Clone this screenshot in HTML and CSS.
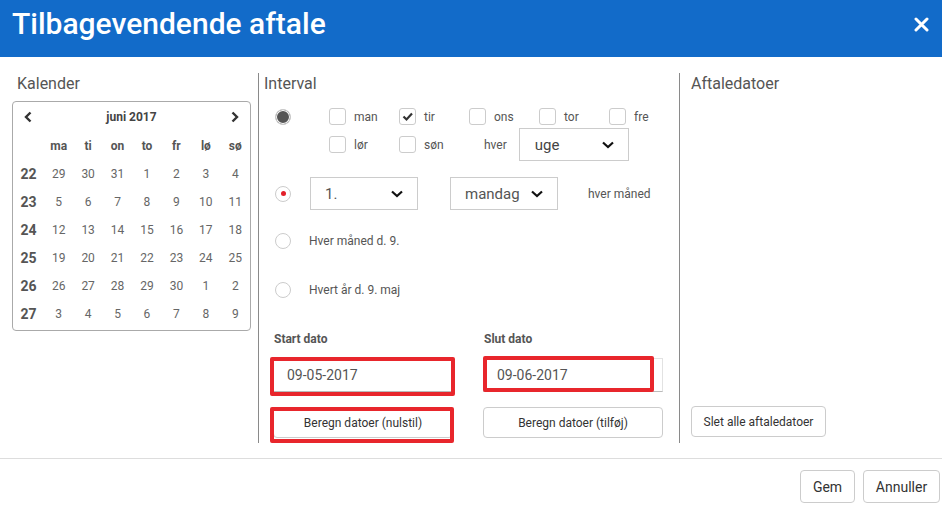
FILE: index.html
```html
<!DOCTYPE html>
<html lang="da">
<head>
    <meta charset="UTF-8">
    <title>Tilbagevendende aftale</title>
    <link rel="stylesheet" href="styles.css">
</head>
<body>
    <div class="dialog-header">
        <div class="dialog-title">Tilbagevendende aftale</div>
        <svg class="close" width="15" height="15" viewBox="0 0 15 15"><path d="M2 2 L13 13 M13 2 L2 13" stroke="#fff" stroke-width="3" stroke-linecap="round"/></svg>
    </div>

    <div class="dialog-body">
        <div class="col col-calendar">
            <div class="col-title">Kalender</div>
            <div class="calendar">
                <div class="cal-head">
                    <svg width="8" height="12" viewBox="0 0 8 12"><path d="M6.5 1.5 L2 6 L6.5 10.5" fill="none" stroke="#333" stroke-width="2.4"/></svg>
                    <span>juni 2017</span>
                    <svg width="8" height="12" viewBox="0 0 8 12"><path d="M1.5 1.5 L6 6 L1.5 10.5" fill="none" stroke="#333" stroke-width="2.4"/></svg>
                </div>
                <div class="cal-grid">
                    <span></span><span class="dow">ma</span><span class="dow">ti</span><span class="dow">on</span><span class="dow">to</span><span class="dow">fr</span><span class="dow">lø</span><span class="dow">sø</span>
                    <span class="wk">22</span><span>29</span><span>30</span><span>31</span><span>1</span><span>2</span><span>3</span><span>4</span>
                    <span class="wk">23</span><span>5</span><span>6</span><span>7</span><span>8</span><span>9</span><span>10</span><span>11</span>
                    <span class="wk">24</span><span>12</span><span>13</span><span>14</span><span>15</span><span>16</span><span>17</span><span>18</span>
                    <span class="wk">25</span><span>19</span><span>20</span><span>21</span><span>22</span><span>23</span><span>24</span><span>25</span>
                    <span class="wk">26</span><span>26</span><span>27</span><span>28</span><span>29</span><span>30</span><span>1</span><span>2</span>
                    <span class="wk">27</span><span>3</span><span>4</span><span>5</span><span>6</span><span>7</span><span>8</span><span>9</span>
                </div>
            </div>
        </div>

        <div class="col col-interval">
            <div class="col-title">Interval</div>
            <div class="interval">
                <div class="row-weekly">
                    <div class="radio-cell"><span class="radio radio-on"></span></div>
                    <div class="days">
                        <div class="days-row">
                            <label class="day"><span class="check"></span>man</label>
                            <label class="day"><span class="check"><svg width="15" height="15" viewBox="0 0 15 15"><path d="M3.5 7.5 L6.5 10.5 L12 4.5" fill="none" stroke="#333" stroke-width="2.2"/></svg></span>tir</label>
                            <label class="day"><span class="check"></span>ons</label>
                            <label class="day"><span class="check"></span>tor</label>
                            <label class="day"><span class="check"></span>fre</label>
                        </div>
                        <div class="days-row days-row-2">
                            <label class="day"><span class="check"></span>lør</label>
                            <label class="day"><span class="check"></span>søn</label>
                            <span class="hver">hver</span>
                            <div class="select select-uge">uge
                                <svg width="12" height="8" viewBox="0 0 12 8"><path d="M1 1.5 L6 6 L11 1.5" fill="none" stroke="#111" stroke-width="2.2"/></svg>
                            </div>
                        </div>
                    </div>
                </div>

                <div class="row-monthly">
                    <span class="radio radio-dot"></span>
                    <div class="select select-nth">1.
                        <svg width="12" height="8" viewBox="0 0 12 8"><path d="M1 1.5 L6 6 L11 1.5" fill="none" stroke="#111" stroke-width="2.2"/></svg>
                    </div>
                    <div class="select select-day">mandag
                        <svg width="12" height="8" viewBox="0 0 12 8"><path d="M1 1.5 L6 6 L11 1.5" fill="none" stroke="#111" stroke-width="2.2"/></svg>
                    </div>
                    <span class="hver-maaned">hver måned</span>
                </div>

                <div class="row-simple row-3">
                    <span class="radio"></span>
                    <span class="row-label">Hver måned d. 9.</span>
                </div>
                <div class="row-simple row-4">
                    <span class="radio"></span>
                    <span class="row-label">Hvert år d. 9. maj</span>
                </div>

                <div class="dates">
                    <div class="date-group date-start">
                        <div class="date-label">Start dato</div>
                        <div class="field flag flag-start"><span>09-05-2017</span></div>
                        <button class="btn btn-calc flag flag-reset">Beregn datoer (nulstil)</button>
                    </div>
                    <div class="date-group date-end">
                        <div class="date-label">Slut dato</div>
                        <div class="field flag flag-end"><span>09-06-2017</span></div>
                        <button class="btn btn-calc">Beregn datoer (tilføj)</button>
                    </div>
                </div>
            </div>
        </div>

        <div class="col col-dates">
            <div class="col-title">Aftaledatoer</div>
            <button class="btn btn-delete">Slet alle aftaledatoer</button>
        </div>
    </div>

    <div class="dialog-footer">
        <button class="btn btn-footer btn-save">Gem</button>
        <button class="btn btn-footer btn-cancel">Annuller</button>
    </div>
</body>
</html>
```

FILE: styles.css
```css
* {
    box-sizing: border-box;
}

body {
    margin: 0;
    font-family: Roboto, "Liberation Sans", sans-serif;
    color: #555;
    background: #fff;
}

.dialog-header {
    height: 57px;
    background-color: #126bc9;
    color: #fff;
    display: flex;
    justify-content: space-between;
    align-items: flex-start;
    padding: 6px 13px 0 12px;
}

.dialog-title {
    font-size: 30px;
    font-weight: 500;
    line-height: 36px;
}

.close {
    margin-top: 11px;
}

.dialog-body {
    display: grid;
    grid-template-columns: 258px 421px 1fr;
    padding: 16px 0 15px;
    border-bottom: 1px solid #ddd;
}

.col {
    height: 370px;
}

.col + .col {
    border-left: 1px solid #8a8a8a;
}

.col-title {
    font-size: 16px;
    line-height: 22px;
    color: #555;
}

/* calendar */
.col-calendar {
    padding-left: 12px;
}

.col-calendar .col-title {
    padding-left: 5px;
}

.calendar {
    margin-top: 6px;
    width: 239px;
    height: 230px;
    border: 1px solid #aaa;
    border-radius: 4px;
}

.cal-head {
    height: 30px;
    display: flex;
    align-items: center;
    justify-content: space-between;
    padding: 0 11px;
    font-size: 12px;
    font-weight: bold;
    color: #444;
}

.cal-grid {
    display: grid;
    grid-template-columns: 31px repeat(7, 1fr);
    grid-auto-rows: 28px;
    font-size: 12px;
    color: #666;
}

.cal-grid span {
    display: flex;
    align-items: center;
    justify-content: center;
}

.cal-grid .dow {
    font-weight: bold;
    color: #555;
}

.cal-grid .wk {
    font-size: 14px;
    font-weight: bold;
    color: #555;
}

/* interval */
.col-interval {
    padding-left: 5px;
}

.interval {
    padding-left: 9px;
    font-size: 12px;
}

.radio {
    display: inline-block;
    width: 16px;
    height: 16px;
    border-radius: 50%;
    border: 1px solid #ccc;
    background: #fff;
    margin-left: 2px;
    flex-shrink: 0;
    position: relative;
}

.radio-on {
    background: #555;
    box-shadow: inset 0 0 0 1px #fff;
}

.radio-dot::after {
    content: "";
    position: absolute;
    left: 5px;
    top: 4px;
    width: 5px;
    height: 5px;
    border-radius: 50%;
    background: #e3202a;
}

.row-weekly {
    margin-top: 13px;
    display: flex;
}

.radio-cell {
    width: 56px;
    padding-top: 1px;
}

.days-row {
    display: flex;
    align-items: center;
    height: 17px;
}

.days-row-2 {
    margin-top: 3px;
    height: 33px;
}

.day {
    width: 70px;
    display: flex;
    align-items: center;
    gap: 8px;
    color: #555;
}

.check {
    width: 17px;
    height: 17px;
    border: 1px solid #ccc;
    border-radius: 3px;
    display: flex;
    align-items: center;
    justify-content: center;
}

.hver {
    margin-left: 15px;
}

.select {
    height: 33px;
    border: 1px solid #ccc;
    display: flex;
    align-items: center;
    justify-content: space-between;
    padding: 0 14px 0 14px;
    font-size: 15px;
    color: #555;
}

.select-uge {
    width: 110px;
    margin-left: 12px;
    padding-left: 15px;
    color: #444;
}

.row-monthly {
    margin-top: 16px;
    display: flex;
    align-items: center;
}

.select-nth {
    width: 108px;
    margin-left: 19px;
}

.select-day {
    width: 108px;
    margin-left: 32px;
}

.hver-maaned {
    margin-left: 30px;
}

.row-simple {
    display: flex;
    align-items: center;
    height: 20px;
}

.row-3 {
    margin-top: 21px;
}

.row-4 {
    margin-top: 29px;
}

.row-label {
    margin-left: 18px;
}

.dates {
    margin-top: 31px;
    display: flex;
    gap: 30px;
}

.date-group {
    width: 180px;
    display: flex;
    flex-direction: column;
}

.date-label {
    font-weight: bold;
    line-height: 16px;
    padding-left: 1px;
}

.field {
    margin-top: 11px;
    height: 34px;
    border: 1px solid #e2e2e2;
    border-bottom-color: #bbb;
    display: flex;
    align-items: center;
    padding-left: 13px;
    font-size: 14px;
    color: #555;
}

.btn {
    font-family: inherit;
    background: #fff;
    border: 1px solid #ccc;
    border-radius: 4px;
    color: #333;
    cursor: pointer;
}

.btn-calc {
    margin-top: 15px;
    height: 31px;
    font-size: 12px;
}

/* red highlight boxes */
.flag {
    position: relative;
}

.flag::after {
    content: "";
    position: absolute;
    border: 4px solid #e8262c;
    border-radius: 2px;
    pointer-events: none;
}

.flag-start::after {
    inset: -2px -3px -5px -4px;
}

.flag-end::after {
    inset: -3px 8px -1px -1px;
}

.flag-reset::after {
    inset: -1px -2px -6px -4px;
}

/* appointment dates */
.col-dates {
    padding-left: 11px;
    display: flex;
    flex-direction: column;
}

.btn-delete {
    margin-top: auto;
    margin-bottom: 6px;
    width: 135px;
    height: 31px;
    font-size: 12px;
}

.dialog-footer {
    display: flex;
    justify-content: flex-end;
    gap: 8px;
    padding: 11px 2px 0 0;
}

.btn-footer {
    height: 33px;
    font-size: 14px;
}

.btn-save {
    width: 55px;
}

.btn-cancel {
    width: 77px;
}
```
